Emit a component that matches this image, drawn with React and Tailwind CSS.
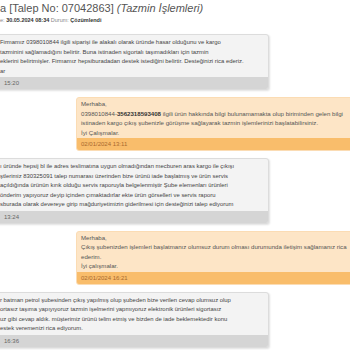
const grayMessages = [
  {
    lines: [
      'Firmamız 0398010844 ilgili siparişi ile alakalı olarak üründe hasar olduğunu ve kargo',
      'tazminini sağlamadığını belirtir. Buna istinaden sigortalı taşımadıkları için tazmin',
      'eklerini belirtmişler. Firmamız hepsiburadadan destek istediğini belirtir. Desteğinizi rica ederiz.',
      'ar',
    ],
    time: '15:20',
  },
  {
    lines: [
      'ı üründe hepsij bl ile adres teslimatına uygun olmadığından mecburen aras kargo ile çıkışı',
      'ştlerimiz 830325091 talep numarası üzerinden bize ürünü iade başlatmış ve ürün servis',
      'açıldığında ürünün kırık olduğu servis raporuyla belgelenmiştir Şube elemenları ürünleri',
      'önderim yapıyoruz deyip içinden çımaktadırlar ekte ürün görselleri ve servis raporu',
      'sburada olarak devereye girip mağduriyetimizin giderilmesi için desteğinizi talep ediyorum',
    ],
    time: '13:24',
  },
  {
    lines: [
      'r batman petrol şubesinden çıkış yapılmış olup şubeden bize verilen cevap olumsuz olup',
      'ortasız taşıma yapıyıyoruz tazmin işelmerini yapmıyoruz elektronik ürünleri sigortasız',
      'uz gibi cevap aldık. müşterimiz ürünü telim etmiş ve bizden de iade beklemektedir konu',
      'estek veremenizi rica ediyorum.',
    ],
    time: '16:36',
  },
];

function GrayBubble({ msg }) {
  return (
    <div className="-ml-[6px] w-[275px] rounded-[3px] border border-[#dcdcdc] bg-[#f3f3f3] shadow-[1px_1px_2px_rgba(0,0,0,0.12)] overflow-hidden">
      <div className="pl-[5px] pr-[4px] pt-[3px] pb-[1px] text-[#444] text-[5.9px] leading-[9.5px] whitespace-nowrap">
        {msg.lines.map((l, i) => <div key={i}>{l}</div>)}
      </div>
      <div className="h-[12px] bg-[#d5d5d5] pl-[9px] text-[6px] leading-[12px] text-[#666]">{msg.time}</div>
    </div>
  );
}

function OrangeBubble({ children, date }) {
  return (
    <div className="ml-[76px] w-[300px] rounded-[3px] border border-[#fbdcb4] bg-[#fde5c6] overflow-hidden">
      <div className="pl-[4px] pt-[1px] pb-[1px] text-[#555] text-[6.1px] leading-[9.5px] whitespace-nowrap">{children}</div>
      <div className="h-[12px] bg-[#f9bd6b] pl-[4px] text-[6px] leading-[12px] text-[#a8692f]">{date}</div>
    </div>
  );
}

export default function App() {
  return (
    <div className="w-[350px] h-[350px] overflow-hidden bg-white" style={{ fontFamily: '"Liberation Sans", Arial, sans-serif' }}>
      <div className="pt-[1px]">
        <div className="text-[11px] leading-[14px] text-[#555] whitespace-nowrap">
          a [Talep No: 07042863] <span className="italic">(Tazmin İşlemleri)</span>
        </div>
        <div className="mt-[1px] text-[5.5px] leading-[8px] text-[#888] whitespace-nowrap">
          e: <b className="text-[#333]">30.05.2024 08:34</b> Durum: <b className="text-[#333]">Çözümlendi</b>
        </div>
      </div>
      <div className="mt-[10px] flex flex-col gap-[7px]">
        <GrayBubble msg={grayMessages[0]} />
        <OrangeBubble date="02/01/2024 13:11">
          <div>Merhaba,</div>
          <div>0398010844-<b className="text-[#333]">3562318593408</b> ilgili ürün hakkında bilgi bulunamamakta olup biriminden gelen bilgi</div>
          <div>istinaden kargo çıkış şubenizle görüşme sağlayarak tazmin işlemlerinizi başlatabilirsiniz.</div>
          <div>İyi Çalışmalar.</div>
        </OrangeBubble>
        <GrayBubble msg={grayMessages[1]} />
        <OrangeBubble date="02/01/2024 16:21">
          <div>Merhaba,</div>
          <div>Çıkış şubenizden işlemleri başlatmanız olumsuz durum olması durumunda iletişim sağlamanız rica</div>
          <div>ederim.</div>
          <div>İyi çalışmalar.</div>
        </OrangeBubble>
        <GrayBubble msg={grayMessages[2]} />
      </div>
    </div>
  );
}
